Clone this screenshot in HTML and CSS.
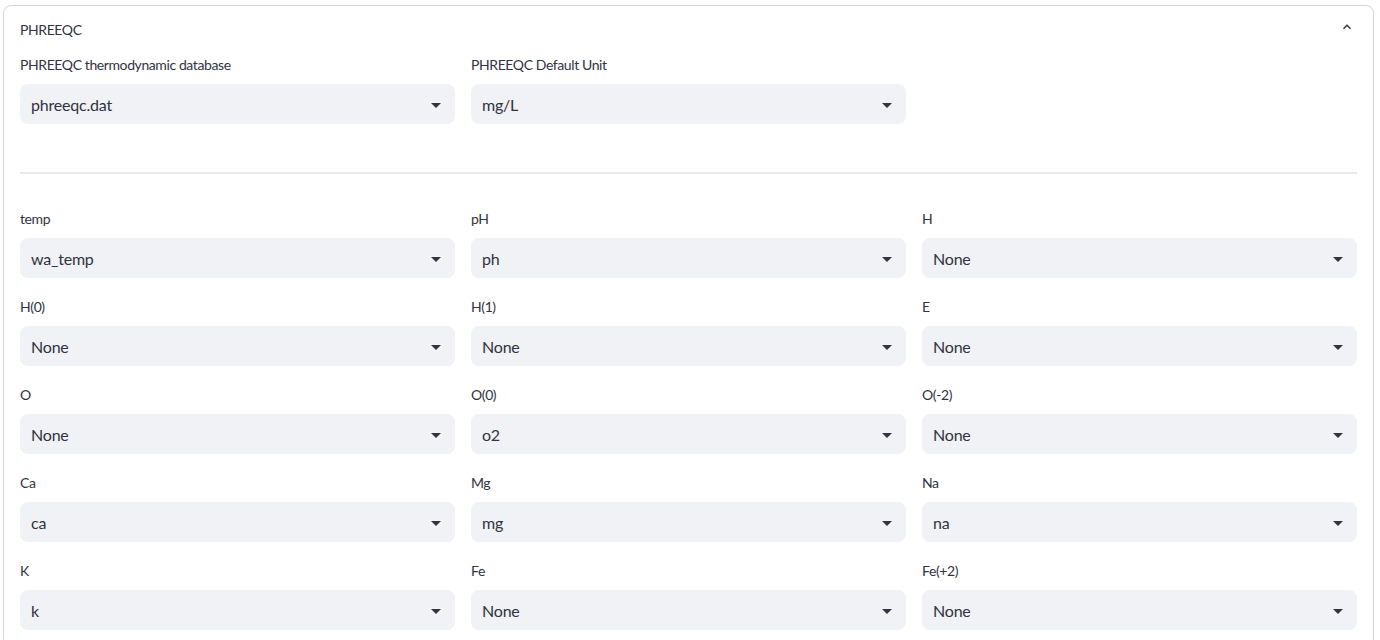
FILE: index.html
```html
<!DOCTYPE html>
<html lang="en">
<head>
<meta charset="utf-8">
<title>PHREEQC</title>
<link rel="stylesheet" href="styles.css">
</head>
<body>
<details class="expander" open>
  <summary class="exp-header">
    <span class="exp-title">PHREEQC</span>
    <svg class="exp-icon" viewBox="0 0 24 24" width="16" height="16"><path d="M12 8l-6 6 1.41 1.41L12 10.83l4.59 4.58L18 14z"/></svg>
  </summary>
  <div class="exp-body">
    <div class="grid">
      <div class="field"><div class="label">PHREEQC thermodynamic database</div><div class="select"><span class="value">phreeqc.dat</span><svg class="caret" viewBox="0 0 24 24" width="24" height="24"><path d="M7 10l5 5 5-5z"/></svg></div></div>
      <div class="field"><div class="label">PHREEQC Default Unit</div><div class="select"><span class="value">mg/L</span><svg class="caret" viewBox="0 0 24 24" width="24" height="24"><path d="M7 10l5 5 5-5z"/></svg></div></div>
    </div>
    <hr class="divider">
    <div class="grid">
      <div class="field"><div class="label">temp</div><div class="select"><span class="value">wa_temp</span><svg class="caret" viewBox="0 0 24 24" width="24" height="24"><path d="M7 10l5 5 5-5z"/></svg></div></div>
      <div class="field"><div class="label">pH</div><div class="select"><span class="value">ph</span><svg class="caret" viewBox="0 0 24 24" width="24" height="24"><path d="M7 10l5 5 5-5z"/></svg></div></div>
      <div class="field"><div class="label">H</div><div class="select"><span class="value">None</span><svg class="caret" viewBox="0 0 24 24" width="24" height="24"><path d="M7 10l5 5 5-5z"/></svg></div></div>
      <div class="field"><div class="label">H(0)</div><div class="select"><span class="value">None</span><svg class="caret" viewBox="0 0 24 24" width="24" height="24"><path d="M7 10l5 5 5-5z"/></svg></div></div>
      <div class="field"><div class="label">H(1)</div><div class="select"><span class="value">None</span><svg class="caret" viewBox="0 0 24 24" width="24" height="24"><path d="M7 10l5 5 5-5z"/></svg></div></div>
      <div class="field"><div class="label">E</div><div class="select"><span class="value">None</span><svg class="caret" viewBox="0 0 24 24" width="24" height="24"><path d="M7 10l5 5 5-5z"/></svg></div></div>
      <div class="field"><div class="label">O</div><div class="select"><span class="value">None</span><svg class="caret" viewBox="0 0 24 24" width="24" height="24"><path d="M7 10l5 5 5-5z"/></svg></div></div>
      <div class="field"><div class="label">O(0)</div><div class="select"><span class="value">o2</span><svg class="caret" viewBox="0 0 24 24" width="24" height="24"><path d="M7 10l5 5 5-5z"/></svg></div></div>
      <div class="field"><div class="label">O(-2)</div><div class="select"><span class="value">None</span><svg class="caret" viewBox="0 0 24 24" width="24" height="24"><path d="M7 10l5 5 5-5z"/></svg></div></div>
      <div class="field"><div class="label">Ca</div><div class="select"><span class="value">ca</span><svg class="caret" viewBox="0 0 24 24" width="24" height="24"><path d="M7 10l5 5 5-5z"/></svg></div></div>
      <div class="field"><div class="label">Mg</div><div class="select"><span class="value">mg</span><svg class="caret" viewBox="0 0 24 24" width="24" height="24"><path d="M7 10l5 5 5-5z"/></svg></div></div>
      <div class="field"><div class="label">Na</div><div class="select"><span class="value">na</span><svg class="caret" viewBox="0 0 24 24" width="24" height="24"><path d="M7 10l5 5 5-5z"/></svg></div></div>
      <div class="field"><div class="label">K</div><div class="select"><span class="value">k</span><svg class="caret" viewBox="0 0 24 24" width="24" height="24"><path d="M7 10l5 5 5-5z"/></svg></div></div>
      <div class="field"><div class="label">Fe</div><div class="select"><span class="value">None</span><svg class="caret" viewBox="0 0 24 24" width="24" height="24"><path d="M7 10l5 5 5-5z"/></svg></div></div>
      <div class="field"><div class="label">Fe(+2)</div><div class="select"><span class="value">None</span><svg class="caret" viewBox="0 0 24 24" width="24" height="24"><path d="M7 10l5 5 5-5z"/></svg></div></div>
    </div>
  </div>
</details>
</body>
</html>
```
FILE: styles.css
```css
html, body {
  margin: 0;
  padding: 0;
  overflow: hidden;
  background: #ffffff;
}
body {
  padding: 5px 6px 0 3px;
  font-family: "Source Sans Pro", Lato, "Liberation Sans", sans-serif;
  color: rgb(49, 51, 63);
}
.expander {
  border: 1px solid rgba(49, 51, 63, 0.2);
  border-radius: 8px;
}
.exp-header {
  list-style: none;
  display: flex;
  align-items: center;
  justify-content: space-between;
  height: 46px;
  padding: 0 18px 0 16px;
  box-sizing: border-box;
  font-size: 14px;
  letter-spacing: -0.4px;
  cursor: pointer;
}
.exp-header::-webkit-details-marker { display: none; }
.exp-icon {
  fill: rgb(49, 51, 63);
  margin-top: -4px;
}
.exp-body {
  padding: 0 16px 16px 16px;
}
.grid {
  display: grid;
  grid-template-columns: repeat(3, 1fr);
  column-gap: 16px;
  row-gap: 16px;
}
.label {
  font-size: 14px;
  letter-spacing: -0.4px;
  height: 24px;
  line-height: 25px;
  margin-bottom: 8px;
}
.select {
  display: flex;
  align-items: center;
  justify-content: space-between;
  height: 40px;
  background: #f0f2f6;
  border-radius: 8px;
  padding: 0 7px 0 11px;
  box-sizing: border-box;
  font-size: 16px;
  letter-spacing: -0.2px;
}
.value {
  margin-top: 1px;
}
.caret {
  fill: rgb(49, 51, 63);
  margin-top: 2px;
}
.divider {
  border: none;
  height: 2px;
  margin: 48px 0 32px;
  background: rgba(49, 51, 63, 0.1);
}
```
